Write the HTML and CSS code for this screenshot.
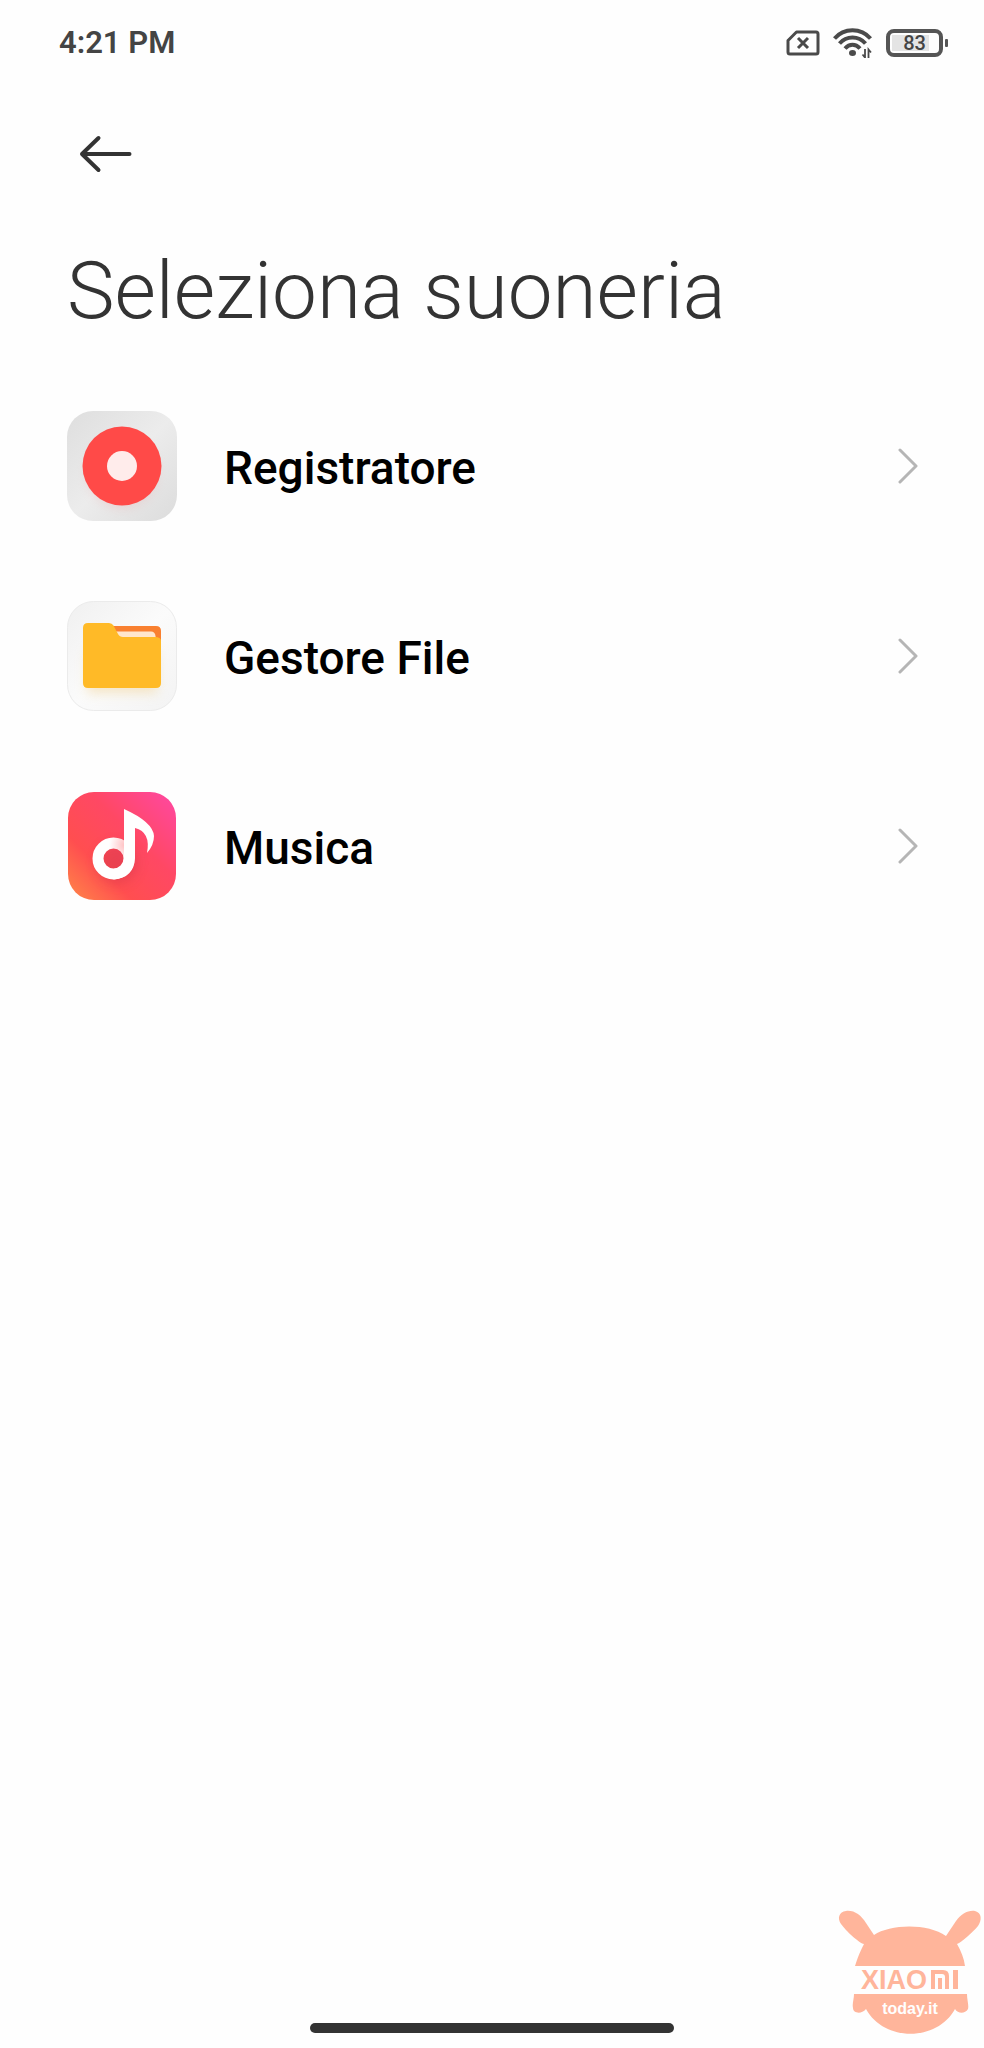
FILE: index.html
```html
<!DOCTYPE html>
<html lang="it">
<head>
<meta charset="utf-8">
<meta name="viewport" content="width=device-width, initial-scale=1">
<title>Seleziona suoneria</title>
<link rel="stylesheet" href="styles.css">
</head>
<body>
<div class="screen">
  <header class="status-bar">
    <time class="clock">4:21 PM</time>
    <div class="status-icons">
      <svg class="sim" viewBox="0 0 34 26" aria-label="Nessuna SIM">
        <path d="M10.500 2H30Q32 2 32 4V22Q32 24 30 24H4Q2 24 2 22V10.500Z" fill="none" stroke="#4a4a4a" stroke-width="3" stroke-linejoin="round"/>
        <path d="M12 8L22 18M22 8L12 18" fill="none" stroke="#4a4a4a" stroke-width="3"/>
      </svg>
      <svg class="wifi" viewBox="0 0 40 30" aria-label="Wi-Fi">
        <g fill="none" stroke="#4a4a4a" stroke-width="4">
          <path d="M1.500 10.500C11 -.5 28 -.5 37.500 10.500"/>
          <path d="M6.500 15.500C13.500 7.500 25.500 7.500 32.500 15.500"/>
          <path d="M12 20.500C16.500 15.500 22.500 15.500 27 20.500"/>
        </g>
        <ellipse cx="19.500" cy="25" rx="3.500" ry="3" fill="#4a4a4a"/>
        <path d="M32 21V29.500L29.500 26.500M35.500 30V21.500L38 24.500" fill="none" stroke="#4a4a4a" stroke-width="1.800"/>
      </svg>
      <div class="battery"><span class="battery-level">83</span></div>
    </div>
  </header>
  <main class="content">
    <button class="back" type="button" aria-label="Indietro">
      <svg viewBox="0 0 54 38"><path d="M50.500 19H3M19.500 3L3 19L19.500 35" fill="none" stroke="#333" stroke-width="4" stroke-linecap="round" stroke-linejoin="round"/></svg>
    </button>
    <h1 class="title">Seleziona suoneria</h1>
    <nav class="sources">
      <a class="source" href="#registratore">
        <svg class="app-icon" viewBox="0 0 110 110">
          <defs>
            <linearGradient id="rec-bg" x1="0" y1="0" x2="1" y2="1"><stop offset="0" stop-color="#dedede"/><stop offset=".5" stop-color="#ececec"/><stop offset="1" stop-color="#dcdcdc"/></linearGradient>
            <filter id="soft" x="-30%" y="-30%" width="160%" height="160%"><feGaussianBlur stdDeviation="6"/></filter>
          </defs>
          <rect width="110" height="110" rx="26" fill="url(#rec-bg)"/>
          <circle cx="55" cy="62" r="34" fill="#e99" opacity=".3" filter="url(#soft)"/>
          <circle cx="55" cy="55" r="39.500" fill="#ff4a48"/>
          <circle cx="55" cy="55" r="15" fill="#ffeceb"/>
        </svg>
        <span class="label">Registratore</span>
        <svg class="chevron" viewBox="0 0 20 36"><path d="M2 2L18 18L2 34" /></svg>
      </a>
      <a class="source" href="#gestore-file">
        <svg class="app-icon" viewBox="0 0 110 110">
          <defs><linearGradient id="file-bg" x1="0" y1="0" x2="1" y2="1"><stop offset="0" stop-color="#f0f0f0"/><stop offset=".5" stop-color="#fbfbfb"/><stop offset="1" stop-color="#f3f3f3"/></linearGradient></defs>
          <rect x=".5" y=".5" width="109" height="109" rx="26" fill="url(#file-bg)" stroke="#ebebeb"/>
          <rect x="20" y="50" width="70" height="42" fill="#f2d7a0" opacity=".6" filter="url(#soft)"/>
          <path d="M40 25H89Q94 25 94 30V50H40Z" fill="#f98030"/>
          <path d="M46 30.500H84Q88 30.500 88.500 35L89.500 42H46Z" fill="#ffe6cb"/>
          <path d="M21 22H42Q45 22 46.500 24.500L51 33Q52.500 36 56 36H88Q94 36 94 40V82Q94 87 89 87H21Q16 87 16 82V27Q16 22 21 22Z" fill="#ffba27"/>
        </svg>
        <span class="label">Gestore File</span>
        <svg class="chevron" viewBox="0 0 20 36"><path d="M2 2L18 18L2 34" /></svg>
      </a>
      <a class="source" href="#musica">
        <svg class="app-icon" viewBox="0 0 110 110">
          <defs>
            <linearGradient id="mus-bg" x1="0" y1="1" x2="1" y2="0"><stop offset="0" stop-color="#ff8748"/><stop offset=".3" stop-color="#ff4e50"/><stop offset=".6" stop-color="#ff4864"/><stop offset="1" stop-color="#ff48a4"/></linearGradient>
            <radialGradient id="note" gradientUnits="userSpaceOnUse" cx="58" cy="54" r="16"><stop offset="0" stop-color="#ffc0c2"/><stop offset="1" stop-color="#fff"/></radialGradient>
          </defs>
          <rect x="1" y="1" width="108" height="108" rx="26" fill="url(#mus-bg)"/>
          <circle cx="50" cy="72" r="20" fill="#c52e46" opacity=".35" filter="url(#soft)"/>
          <circle cx="46.500" cy="67.500" r="15.500" fill="none" stroke="url(#note)" stroke-width="11"/>
          <path d="M57 18Q86 31 87 45Q87 54 80 62Q84 41 68 37V67Q67 87 46.500 88.500V78Q57 77 57 67Z" fill="#fff"/>
        </svg>
        <span class="label">Musica</span>
        <svg class="chevron" viewBox="0 0 20 36"><path d="M2 2L18 18L2 34" /></svg>
      </a>
    </nav>
  </main>
  <footer class="gesture-area"><div class="gesture-bar"></div></footer>
  <svg class="watermark" viewBox="0 0 154 148" aria-label="XIAOMI today.it">
    <g fill="#ffb59b">
      <path d="M25 66C28 56 31 50 34 44C29 43 16 31 11 24C7 18 9 12 16 11C24 10 31 15 36 23L44 35C60 24 98 23 116 36L126 21C131 14 138 10 145 11C152 13 152 20 148 26C143 32 132 42 127 44C131 51 134 58 135 66Z"/>
      <path d="M24 94H137C137 100 139 105 138 109C135 114 128 114 125 109C107 142 54 142 36 109C31 115 23 113 23 108C22 104 24 99 24 94Z"/>
      <path d="M101 70H113Q119 70 119 76V89H115V77Q115 74 112 74H105V89H101ZM108 78H112V89H108ZM123 70H128V89H123Z"/>
    </g>
    <text class="brand" x="31" y="89">XIAO</text>
    <text class="site" x="80" y="114" text-anchor="middle">today.it</text>
  </svg>
</div>
</body>
</html>
```
FILE: styles.css
```css
* { box-sizing: border-box; }

body {
  margin: 0;
  background: #fefefe;
  font-family: Roboto, "Noto Sans", sans-serif;
  color: #000;
}

svg { display: block; flex: none; }

.screen {
  position: relative;
  display: flex;
  flex-direction: column;
  min-height: 100vh;
}

.status-bar {
  display: flex;
  align-items: center;
  justify-content: space-between;
  padding: 23px 36px 0 59px;
}

.clock {
  font-size: 31px;
  line-height: 40px;
  font-weight: 600;
  color: #444;
}

.status-icons {
  display: flex;
  align-items: center;
  gap: 13px;
}

.sim { width: 34px; height: 26px; }
.wifi { width: 40px; height: 30px; }

.battery {
  position: relative;
  width: 57px;
  height: 28px;
  margin-right: 5px;
  padding: 2px;
  border: 4px solid #555;
  border-radius: 8px;
}

.battery::after {
  content: "";
  position: absolute;
  top: 6px;
  right: -9px;
  width: 3px;
  height: 8px;
  border-radius: 1px;
  background: #555;
}

.battery-level {
  display: block;
  background: linear-gradient(to right, #e4e4e4 83%, transparent 83%);
  font-size: 20px;
  line-height: 16px;
  font-weight: 500;
  text-align: center;
  color: #444;
}

.content {
  flex: 1;
  padding: 72px 66px 0 67px;
}

.back {
  display: block;
  margin: 0 0 0 12px;
  padding: 0;
  border: 0;
  background: none;
}

.back svg { width: 54px; height: 38px; }

.title {
  margin: 70px 0 72px;
  font-size: 80px;
  line-height: 96px;
  font-weight: 300;
  color: #333;
}

.sources {
  display: flex;
  flex-direction: column;
  gap: 80px;
}

.source {
  display: flex;
  align-items: center;
  color: inherit;
  text-decoration: none;
}

.app-icon { width: 110px; height: 110px; }

.label {
  flex: 1;
  padding: 4px 0 0 47px;
  font-size: 46px;
  line-height: 52px;
  font-weight: 500;
}

.chevron { width: 20px; height: 36px; }

.chevron path {
  fill: none;
  stroke: #b5b5b5;
  stroke-width: 3;
  stroke-linecap: round;
  stroke-linejoin: round;
}

.gesture-area { padding: 0 0 15px; }

.gesture-bar {
  width: 37%;
  height: 10px;
  margin: 0 auto;
  border-radius: 5px;
  background: #333;
}

.watermark {
  position: absolute;
  right: 0;
  bottom: 0;
  width: 154px;
  height: 148px;
}

.brand {
  font: bold 27px "Liberation Sans", sans-serif;
  fill: #ffb59b;
}

.site {
  font: bold 16px "Liberation Sans", sans-serif;
  fill: #fff;
}
```
